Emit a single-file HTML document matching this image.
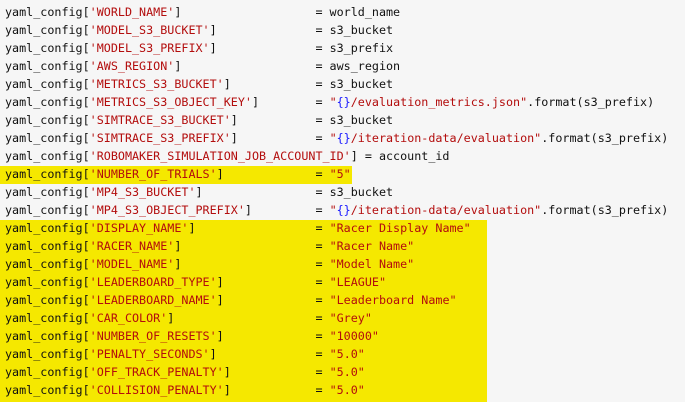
<!DOCTYPE html>
<html><head><meta charset="utf-8"><style>
html,body{margin:0;padding:0;background:#f6f6f6;width:685px;height:402px;overflow:hidden}
.c{position:absolute;top:3px;left:0;font-family:"DejaVu Sans Mono","Liberation Mono",monospace;font-size:11.72px;color:#111}
.l{height:18px;line-height:18px;white-space:pre;padding-left:5px}
.s{color:#b30d0d}.b{color:#1a1aff}
.h1{position:absolute;left:0;top:166px;width:352px;height:18px;background:#f5e800}
.h2{position:absolute;left:0;top:220px;width:487px;height:182px;background:#f5e800}
</style></head><body>
<div class="h1"></div><div class="h2"></div>
<div class="c">
<div class="l">yaml_config[<span class="s">'WORLD_NAME'</span>]                   = world_name</div>
<div class="l">yaml_config[<span class="s">'MODEL_S3_BUCKET'</span>]              = s3_bucket</div>
<div class="l">yaml_config[<span class="s">'MODEL_S3_PREFIX'</span>]              = s3_prefix</div>
<div class="l">yaml_config[<span class="s">'AWS_REGION'</span>]                   = aws_region</div>
<div class="l">yaml_config[<span class="s">'METRICS_S3_BUCKET'</span>]            = s3_bucket</div>
<div class="l">yaml_config[<span class="s">'METRICS_S3_OBJECT_KEY'</span>]        = <span class="s">"<span class="b">{}</span>/evaluation_metrics.json"</span>.format(s3_prefix)</div>
<div class="l">yaml_config[<span class="s">'SIMTRACE_S3_BUCKET'</span>]           = s3_bucket</div>
<div class="l">yaml_config[<span class="s">'SIMTRACE_S3_PREFIX'</span>]           = <span class="s">"<span class="b">{}</span>/iteration-data/evaluation"</span>.format(s3_prefix)</div>
<div class="l">yaml_config[<span class="s">'ROBOMAKER_SIMULATION_JOB_ACCOUNT_ID'</span>] = account_id</div>
<div class="l">yaml_config[<span class="s">'NUMBER_OF_TRIALS'</span>]             = <span class="s">"5"</span></div>
<div class="l">yaml_config[<span class="s">'MP4_S3_BUCKET'</span>]                = s3_bucket</div>
<div class="l">yaml_config[<span class="s">'MP4_S3_OBJECT_PREFIX'</span>]         = <span class="s">"<span class="b">{}</span>/iteration-data/evaluation"</span>.format(s3_prefix)</div>
<div class="l">yaml_config[<span class="s">'DISPLAY_NAME'</span>]                 = <span class="s">"Racer Display Name"</span></div>
<div class="l">yaml_config[<span class="s">'RACER_NAME'</span>]                   = <span class="s">"Racer Name"</span></div>
<div class="l">yaml_config[<span class="s">'MODEL_NAME'</span>]                   = <span class="s">"Model Name"</span></div>
<div class="l">yaml_config[<span class="s">'LEADERBOARD_TYPE'</span>]             = <span class="s">"LEAGUE"</span></div>
<div class="l">yaml_config[<span class="s">'LEADERBOARD_NAME'</span>]             = <span class="s">"Leaderboard Name"</span></div>
<div class="l">yaml_config[<span class="s">'CAR_COLOR'</span>]                    = <span class="s">"Grey"</span></div>
<div class="l">yaml_config[<span class="s">'NUMBER_OF_RESETS'</span>]             = <span class="s">"10000"</span></div>
<div class="l">yaml_config[<span class="s">'PENALTY_SECONDS'</span>]              = <span class="s">"5.0"</span></div>
<div class="l">yaml_config[<span class="s">'OFF_TRACK_PENALTY'</span>]            = <span class="s">"5.0"</span></div>
<div class="l">yaml_config[<span class="s">'COLLISION_PENALTY'</span>]            = <span class="s">"5.0"</span></div>
</div>
</body></html>
